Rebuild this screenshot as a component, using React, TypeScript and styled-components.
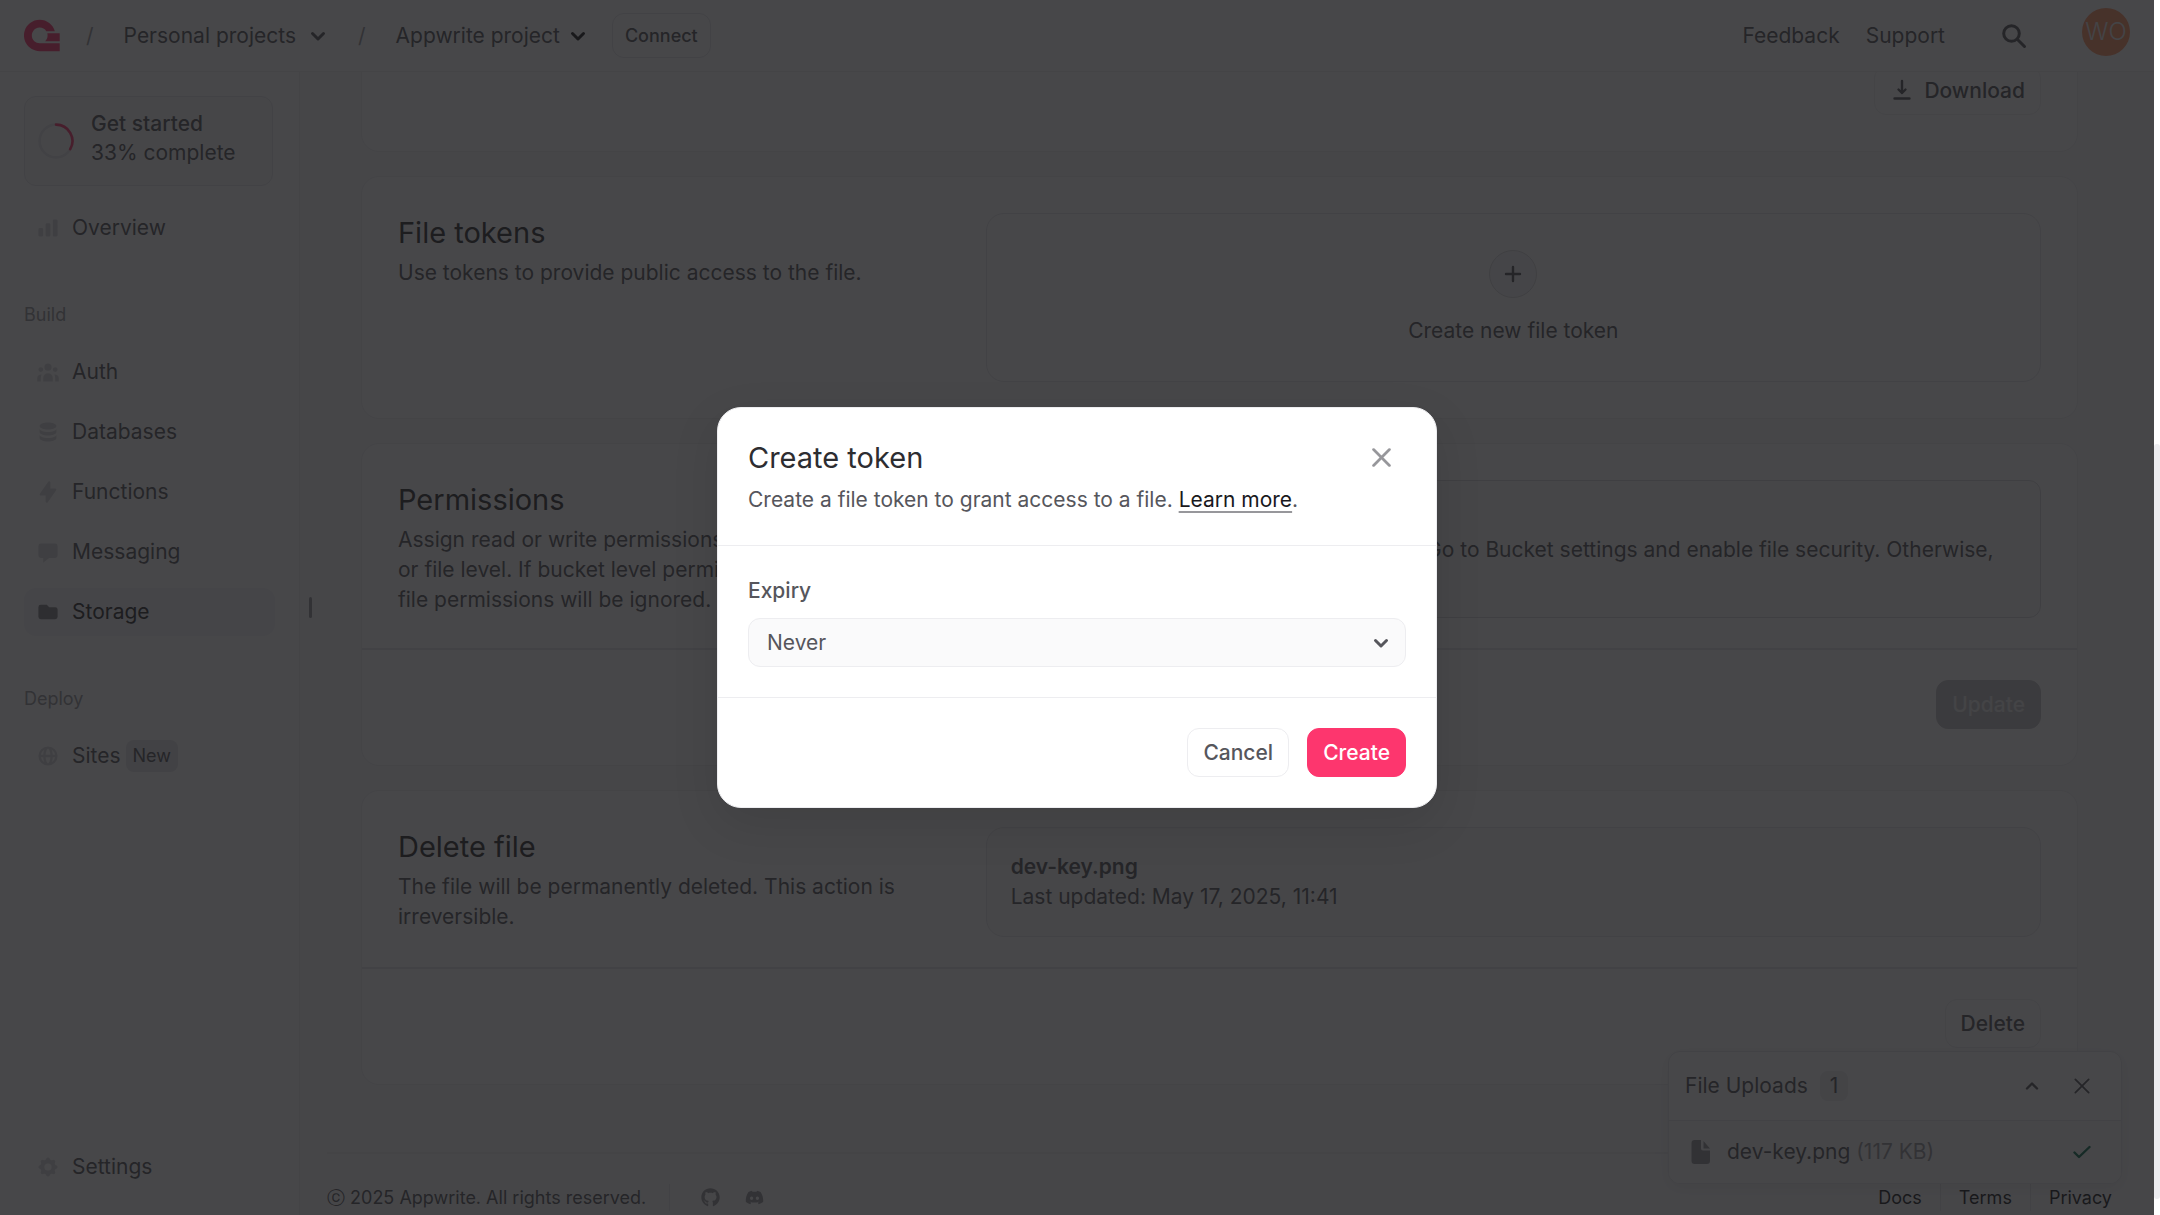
import React from 'react';
import styled, { createGlobalStyle } from 'styled-components';
import { HiChartBar, HiUserGroup, HiDatabase, HiLightningBolt, HiFolder, HiGlobeAlt, HiCog } from 'react-icons/hi';
import { FaGithub, FaDiscord } from 'react-icons/fa';

const color = {
  white: '#ffffff',
  n50: '#fafafb',
  n100: '#f4f4f7',
  n150: '#ededf0',
  n175: '#e4e4e8',
  n200: '#d8d8db',
  n300: '#c3c3c6',
  n500: '#97979b',
  n600: '#818186',
  n700: '#56565c',
  n800: '#2d2d31',
  n900: '#19191d',
  pink: '#fd366e',
  orange: '#fe9567',
  green: '#0a714f',
};

const GlobalStyle = createGlobalStyle`
  *, *::before, *::after { box-sizing: border-box; }
  body {
    margin: 0;
    overflow: hidden;
    background: ${color.white};
    font-family: Inter, "Liberation Sans", sans-serif;
    font-size: 21px;
    line-height: 30px;
    color: ${color.n700};
  }
  h2, h3, p, ul { margin: 0; padding: 0; }
  button, select { font: inherit; color: inherit; }
  a { color: inherit; text-decoration: none; }
  svg { display: block; flex: none; }
`;

/* ---------- page frame ---------- */

const Page = styled.div`
  display: grid;
  grid-template-columns: minmax(0, 1fr) 6px;
  height: 100vh;
`;

const Frame = styled.div`
  position: relative;
  display: grid;
  grid-template-rows: 72px minmax(0, 1fr);
  min-height: 0;
  overflow: hidden;
`;

const ScrollTrack = styled.div`
  display: flex;
  flex-direction: column;
  justify-content: flex-end;
  padding-bottom: 16px;
  background: ${color.white};
`;

const ScrollThumb = styled.div`
  height: 63%;
  border-radius: 3px;
  background: ${color.n150};
`;

const Columns = styled.div`
  display: grid;
  grid-template-columns: 300px minmax(0, 1fr);
  min-height: 0;
`;

/* ---------- header ---------- */

const Header = styled.header`
  position: relative;
  z-index: 1;
  display: flex;
  align-items: center;
  justify-content: space-between;
  padding: 0 24px;
  background: ${color.white};
  border-bottom: 1px solid ${color.n150};
`;

const HeaderGroup = styled.div`
  display: flex;
  align-items: center;
`;

const Slash = styled.span<{ $before: number }>`
  margin: 0 30px 0 ${(p) => p.$before}px;
  color: ${color.n500};
`;

const Crumb = styled.button<{ $gap: number; $arrow: string }>`
  display: flex;
  align-items: center;
  gap: ${(p) => p.$gap}px;
  padding: 0;
  border: 0;
  background: none;
  svg { color: ${(p) => p.$arrow}; }
`;

const ConnectButton = styled.button`
  height: 45px;
  margin-left: 22px;
  padding: 0 12px;
  border: 1px solid ${color.n175};
  border-radius: 12px;
  background: ${color.white};
  font-size: 18px;
  font-weight: 500;
`;

const HeaderLinks = styled.nav`
  display: flex;
  gap: 26px;
  margin-right: 45px;
`;

const SearchButton = styled.button`
  display: flex;
  justify-content: center;
  width: 48px;
  margin-right: 44px;
  padding: 0;
  border: 0;
  background: none;
`;

const Avatar = styled.button`
  display: flex;
  align-items: center;
  justify-content: center;
  align-self: flex-start;
  width: 48px;
  height: 48px;
  padding: 0;
  margin-bottom: 8px;
  border: 0;
  border-radius: 50%;
  background: ${color.orange};
  color: ${color.n150};
  font-size: 24px;
  font-weight: 300;
`;

/* ---------- side bar ---------- */

const Sidebar = styled.aside`
  display: flex;
  flex-direction: column;
  justify-content: space-between;
  padding: 24px;
  border-right: 1px solid ${color.n150};
  background: ${color.white};
`;

const Progress = styled.a`
  display: flex;
  gap: 17px;
  height: 90px;
  margin: 0 2px 18px 0;
  padding: 0 13px;
  border: 1px solid ${color.n175};
  border-radius: 12px;
  background: ${color.n50};
  line-height: 29px;
  svg { align-self: center; }
`;

const ProgressText = styled.span`
  display: flex;
  flex-direction: column;
  padding-top: 12px;
`;

const Strong = styled.span`
  font-weight: 500;
`;

const NavList = styled.ul`
  display: flex;
  flex-direction: column;
  gap: 12px;
  list-style: none;
`;

const NavLabel = styled.p`
  margin: 49px 0 20px;
  color: ${color.n500};
  font-size: 18px;
  line-height: 27px;
`;

const NavLink = styled.a<{ $active?: boolean }>`
  display: flex;
  align-items: center;
  height: 48px;
  padding: 0 12px;
  border-radius: 12px;
  background: ${(p) => (p.$active ? color.n100 : 'transparent')};
  color: ${(p) => (p.$active ? color.n800 : color.n700)};
  svg {
    margin-right: 12px;
    color: ${(p) => (p.$active ? color.n600 : color.n200)};
  }
`;

const NewBadge = styled.span`
  margin-left: 5px;
  padding: 2px 7px;
  border-radius: 8px;
  background: ${color.n175};
  font-size: 18px;
  line-height: 28px;
`;

const Resizer = styled.div`
  position: absolute;
  left: 309px;
  top: calc(50% - 11px);
  width: 3px;
  height: 21px;
  border-radius: 2px;
  background: ${color.n500};
`;

/* ---------- main area ---------- */

const Main = styled.main`
  min-height: 0;
  overflow: hidden;
  padding: 0 42px 0 27px;
  background: ${color.n50};
`;

/* The list is scrolled, so its first card runs up under the header. */
const CardList = styled.div`
  display: flex;
  flex-direction: column;
  gap: 24px;
  margin-top: -48px;
  padding: 0 34px;
`;

const Card = styled.section`
  border: 1px solid ${color.n150};
  border-radius: 18px;
  background: ${color.white};
`;

const CardBody = styled.div`
  display: grid;
  grid-template-columns: minmax(0, 1fr) minmax(0, 2fr);
  gap: 60px;
  padding: 36px 36px 30px;
`;

const PlainCard = styled(Card)`
  ${CardBody} { padding-bottom: 36px; }
`;

const CardFoot = styled.div`
  display: flex;
  justify-content: flex-end;
  padding: 30px 36px 36px;
  border-top: 2px solid ${color.n175};
`;

const FileCard = styled(Card)`
  display: flex;
  align-items: flex-end;
  justify-content: flex-end;
  height: 128px;
  padding: 36px;
`;

const Title = styled.h2`
  color: ${color.n800};
  font-size: 29px;
  font-weight: 400;
  line-height: 39px;
`;

const Description = styled.p`
  margin-top: 6px;
`;

const Button = styled.button<{ $kind?: 'primary' | 'disabled' }>`
  display: flex;
  align-items: center;
  gap: 10px;
  height: 49px;
  padding: 0 15px;
  border: 1px solid
    ${(p) => (p.$kind === 'primary' ? color.pink : p.$kind === 'disabled' ? color.n300 : color.n150)};
  border-radius: 12px;
  background: ${(p) => (p.$kind === 'primary' ? color.pink : p.$kind === 'disabled' ? color.n300 : color.white)};
  color: ${(p) => (p.$kind === 'primary' ? color.white : p.$kind === 'disabled' ? color.n150 : color.n700)};
  font-weight: 500;
`;

const EmptyState = styled.button`
  display: flex;
  flex-direction: column;
  align-items: center;
  justify-content: center;
  gap: 18px;
  height: 169px;
  border: 1px solid ${color.n175};
  border-radius: 18px;
  background: none;
`;

const PlusCircle = styled.span`
  display: flex;
  align-items: center;
  justify-content: center;
  width: 48px;
  height: 48px;
  border: 1px solid ${color.n200};
  border-radius: 50%;
  background: ${color.n100};
`;

const Alert = styled.div`
  display: flex;
  gap: 12px;
  padding: 24px 24px 22px;
  border: 1px solid ${color.n200};
  border-radius: 12px;
  background: ${color.n50};
  svg { margin-top: 3px; color: ${color.n500}; }
`;

const FileBox = styled.div`
  align-self: start;
  padding: 24px;
  border: 1px solid ${color.n175};
  border-radius: 18px;
  background: ${color.n50};
`;

const FileName = styled.h3`
  font-size: 21px;
  font-weight: 600;
  line-height: 30px;
`;

/* ---------- footer ---------- */

const Footer = styled.footer`
  display: flex;
  align-items: center;
  justify-content: space-between;
  margin-top: 67px;
  padding-top: 30px;
  border-top: 2px solid ${color.n150};
  font-size: 18px;
  line-height: 27px;
`;

const FooterGroup = styled.div<{ $gap: number }>`
  display: flex;
  align-items: center;
  gap: ${(p) => p.$gap}px;
`;

const Rule = styled.span`
  width: 1px;
  height: 27px;
  background: ${color.n175};
`;

const SocialLink = styled.a`
  margin-left: 8px;
  color: ${color.n500};
`;

const FooterLink = styled.a`
  color: ${color.n900};
`;

/* ---------- upload panel ---------- */

const Uploads = styled.aside`
  position: absolute;
  right: 32px;
  bottom: 31px;
  width: 454px;
  border: 1px solid ${color.n175};
  border-radius: 12px;
  background: ${color.white};
  box-shadow: 0 4px 16px rgba(0, 0, 0, 0.08);
  overflow: hidden;
`;

const UploadsHead = styled.div`
  display: flex;
  align-items: center;
  height: 69px;
  padding: 0 14px 0 16px;
  border-bottom: 1px solid ${color.n175};
`;

const CountBadge = styled.span`
  margin: 0 auto 0 12px;
  padding: 0 10px;
  border-radius: 8px;
  background: ${color.n150};
`;

const IconButton = styled.button<{ $width: number; $color: string }>`
  display: flex;
  align-items: center;
  justify-content: center;
  width: ${(p) => p.$width}px;
  height: 39px;
  padding: 0;
  border: 0;
  background: none;
  color: ${(p) => p.$color};
`;

const UploadRow = styled.div`
  display: flex;
  align-items: center;
  height: 62px;
  padding: 0 30px 0 22px;
  background: ${color.n50};
`;

const UploadName = styled.p`
  flex: 1;
  margin-left: 16px;
`;

const Muted = styled.span`
  color: ${color.n500};
`;

/* ---------- dialog ---------- */

const Overlay = styled.div`
  position: absolute;
  inset: 0;
  z-index: 2;
  display: flex;
  align-items: center;
  justify-content: center;
  background: rgba(25, 25, 28, 0.8);
`;

const Dialog = styled.form`
  width: 720px;
  border: 1px solid ${color.n150};
  border-radius: 24px;
  background: ${color.white};
  box-shadow: 0 16px 48px rgba(0, 0, 0, 0.1);
`;

const DialogPart = styled.div`
  padding: 30px;
  & + & { border-top: 1px solid ${color.n150}; }
`;

const DialogTop = styled.div`
  display: flex;
  justify-content: space-between;
  margin-bottom: 8px;
`;

const TextLink = styled.a`
  color: ${color.n900};
  text-decoration: underline;
  text-decoration-color: ${color.n500};
  text-decoration-thickness: 2px;
  text-underline-offset: 4px;
`;

const Label = styled.label`
  display: block;
  margin-bottom: 12px;
  font-weight: 500;
`;

const SelectWrap = styled.div`
  position: relative;
  svg {
    position: absolute;
    right: 13px;
    top: 13px;
    pointer-events: none;
  }
`;

const Select = styled.select`
  display: block;
  width: 100%;
  height: 49px;
  padding: 0 18px;
  border: 1px solid ${color.n150};
  border-radius: 12px;
  background: ${color.n50};
  appearance: none;
`;

const Actions = styled.div`
  display: flex;
  justify-content: flex-end;
  gap: 18px;
`;

/* ---------- drawings ---------- */

const Logo = () => (
  <svg width="36" height="33" viewBox="0 0 112 98" fill={color.pink} aria-hidden="true">
    <path d="M111.1 73.473v24.49H48.87C30.74 97.964 14.91 88.114 6.44 73.473a48.6 48.6 0 0 1-3.21-6.68A48.4 48.4 0 0 1 0 52.293v-6.622c.073-1.133.19-2.258.34-3.369.31-2.28.777-4.51 1.392-6.679C7.545 15.064 26.448 0 48.87 0s41.323 15.064 47.136 35.623H69.399C65.03 28.922 57.469 24.491 48.87 24.491s-16.16 4.43-20.527 11.132a24.4 24.4 0 0 0-3.042 6.68 24.5 24.5 0 0 0-.921 6.679c0 7.02 2.952 13.347 7.685 17.811a24.4 24.4 0 0 0 16.806 6.68H111.1Z" />
    <path d="M111.1 42.303v24.49H65.676c4.733-4.463 7.686-10.79 7.686-17.811 0-2.315-.321-4.555-.922-6.68H111.1Z" />
  </svg>
);

const Chevron = ({ up = false }: { up?: boolean }) => (
  <svg width="24" height="24" viewBox="0 0 24 24" fill="none" stroke="currentColor" strokeWidth={up ? 2.4 : 3} strokeLinecap="round" strokeLinejoin="round" aria-hidden="true">
    <path d={up ? 'M7 14.5l5-5 5 5' : 'M6.5 9.5l5.500 5.500 5.500-5.500'} />
  </svg>
);

const Cross = ({ size, weight }: { size: number; weight: number }) => (
  <svg width={size} height={size} viewBox="0 0 18 18" fill="none" stroke="currentColor" strokeWidth={weight} strokeLinecap="round" aria-hidden="true">
    <path d="M1.5 1.5l15 15M16.5 1.5l-15 15" />
  </svg>
);

const SearchIcon = () => (
  <svg width="26" height="26" viewBox="0 0 26 26" fill="none" stroke={color.n700} strokeWidth="3" strokeLinecap="round" aria-hidden="true">
    <circle cx="10.5" cy="10.5" r="7.8" />
    <path d="M16.5 16.5l7 7" />
  </svg>
);

const Ring = () => (
  <svg width="36" height="36" viewBox="0 0 36 36" fill="none" strokeWidth="2.6" strokeLinecap="round" aria-hidden="true">
    <circle cx="18" cy="18" r="16.4" stroke={color.n175} />
    <path d="M18 1.6A16.4 16.4 0 0 1 32.2 26.2" stroke={color.pink} />
  </svg>
);

const MessageIcon = () => (
  <svg width="24" height="24" viewBox="0 0 20 20" fill="currentColor" aria-hidden="true">
    <path d="M18 5v8a2 2 0 0 1-2 2h-5l-5 4v-4H4a2 2 0 0 1-2-2V5a2 2 0 0 1 2-2h12a2 2 0 0 1 2 2z" />
  </svg>
);

const DownloadIcon = () => (
  <svg width="24" height="24" viewBox="0 0 24 24" fill="none" stroke="currentColor" strokeWidth="2.4" strokeLinecap="round" strokeLinejoin="round" aria-hidden="true">
    <path d="M12 2v12M8.500 10.500l3.500 3.500 3.500-3.500M4.500 19.500h15" />
  </svg>
);

const PlusIcon = () => (
  <svg width="18" height="18" viewBox="0 0 18 18" fill="none" stroke="currentColor" strokeWidth="2.4" strokeLinecap="round" aria-hidden="true">
    <path d="M9 2v14M2 9h14" />
  </svg>
);

const InfoIcon = () => (
  <svg width="24" height="24" viewBox="0 0 24 24" fill="none" stroke="currentColor" strokeWidth="2" strokeLinecap="round" aria-hidden="true">
    <circle cx="12" cy="12" r="9" />
    <path d="M12 11v5M12 8v.1" />
  </svg>
);

const FileIcon = () => (
  <svg width="20" height="26" viewBox="0 0 20 26" fill={color.n500} aria-hidden="true">
    <path d="M3.500 1H10v8.500a2 2 0 0 0 2 2h7V22a3 3 0 0 1-3 3H3.500a3 3 0 0 1-3-3V4a3 3 0 0 1 3-3z" />
    <path d="M12.500 2l6.500 7.500h-6.500z" />
  </svg>
);

const CheckIcon = () => (
  <svg width="18" height="14" viewBox="0 0 18 14" fill="none" stroke={color.green} strokeWidth="2.4" strokeLinecap="round" strokeLinejoin="round" aria-hidden="true">
    <path d="M1.500 7.500l4.500 4.500L16.500 2" />
  </svg>
);

/* ---------- app ---------- */

const buildLinks = [
  { name: 'Auth', icon: <HiUserGroup size={24} /> },
  { name: 'Databases', icon: <HiDatabase size={24} /> },
  { name: 'Functions', icon: <HiLightningBolt size={24} /> },
  { name: 'Messaging', icon: <MessageIcon /> },
  { name: 'Storage', icon: <HiFolder size={24} />, active: true },
];

export default function App() {
  return (
    <Page>
      <GlobalStyle />
      <Frame>
        <Header>
          <HeaderGroup>
            <Logo />
            <Slash $before={26}>/</Slash>
            <Crumb type="button" $gap={10} $arrow={color.n700}>
              Personal projects
              <Chevron />
            </Crumb>
            <Slash $before={28}>/</Slash>
            <Crumb type="button" $gap={6} $arrow={color.n900}>
              Appwrite project
              <Chevron />
            </Crumb>
            <ConnectButton type="button">Connect</ConnectButton>
          </HeaderGroup>
          <HeaderGroup>
            <HeaderLinks>
              <a href="#feedback">Feedback</a>
              <a href="#support">Support</a>
            </HeaderLinks>
            <SearchButton type="button" aria-label="Search">
              <SearchIcon />
            </SearchButton>
            <Avatar type="button">WO</Avatar>
          </HeaderGroup>
        </Header>

        <Columns>
          <Sidebar>
            <nav>
              <Progress href="#start">
                <Ring />
                <ProgressText>
                  <Strong>Get started</Strong>
                  <span>33% complete</span>
                </ProgressText>
              </Progress>
              <NavLink href="#overview">
                <HiChartBar size={24} />
                Overview
              </NavLink>
              <NavLabel>Build</NavLabel>
              <NavList>
                {buildLinks.map((link) => (
                  <li key={link.name}>
                    <NavLink href="#section" $active={link.active}>
                      {link.icon}
                      {link.name}
                    </NavLink>
                  </li>
                ))}
              </NavList>
              <NavLabel>Deploy</NavLabel>
              <NavLink href="#sites">
                <HiGlobeAlt size={24} />
                Sites
                <NewBadge>New</NewBadge>
              </NavLink>
            </nav>
            <NavLink href="#settings">
              <HiCog size={24} />
              Settings
            </NavLink>
          </Sidebar>

          <Main>
            <CardList>
              <FileCard>
                <Button type="button">
                  <DownloadIcon />
                  Download
                </Button>
              </FileCard>

              <PlainCard>
                <CardBody>
                  <div>
                    <Title>File tokens</Title>
                    <Description>Use tokens to provide public access to the file.</Description>
                  </div>
                  <EmptyState type="button">
                    <PlusCircle>
                      <PlusIcon />
                    </PlusCircle>
                    Create new file token
                  </EmptyState>
                </CardBody>
              </PlainCard>

              <Card>
                <CardBody>
                  <div>
                    <Title>Permissions</Title>
                    <Description>
                      Assign read or write permissions at the bucket level or file level. If bucket level permissions
                      are assigned, file permissions will be ignored.
                    </Description>
                  </div>
                  <Alert>
                    <InfoIcon />
                    <div>
                      <Strong>File security is disabled</Strong>
                      <p>
                        If you want to assign file permissions. Go to Bucket settings and enable file security.
                        Otherwise, only bucket permissions apply.
                      </p>
                    </div>
                  </Alert>
                </CardBody>
                <CardFoot>
                  <Button type="button" $kind="disabled" disabled>
                    Update
                  </Button>
                </CardFoot>
              </Card>

              <Card>
                <CardBody>
                  <div>
                    <Title>Delete file</Title>
                    <Description>The file will be permanently deleted. This action is irreversible.</Description>
                  </div>
                  <FileBox>
                    <FileName>dev-key.png</FileName>
                    <p>Last updated: May 17, 2025, 11:41</p>
                  </FileBox>
                </CardBody>
                <CardFoot>
                  <Button type="button">Delete</Button>
                </CardFoot>
              </Card>
            </CardList>

            <Footer>
              <FooterGroup $gap={23}>
                <span>ⓒ 2025 Appwrite. All rights reserved.</span>
                <Rule />
                <FooterGroup $gap={17}>
                  <SocialLink href="#github" aria-label="GitHub">
                    <FaGithub size={19} />
                  </SocialLink>
                  <SocialLink href="#discord" aria-label="Discord">
                    <FaDiscord size={19} />
                  </SocialLink>
                </FooterGroup>
              </FooterGroup>
              <FooterGroup $gap={18}>
                <FooterLink href="#docs">Docs</FooterLink>
                <Rule />
                <FooterLink href="#terms">Terms</FooterLink>
                <Rule />
                <FooterLink href="#privacy">Privacy</FooterLink>
              </FooterGroup>
            </Footer>
          </Main>
        </Columns>

        <Resizer />

        <Uploads>
          <UploadsHead>
            File Uploads
            <CountBadge>1</CountBadge>
            <IconButton type="button" aria-label="Collapse" $width={50} $color={color.n700}>
              <Chevron up />
            </IconButton>
            <IconButton type="button" aria-label="Close uploads" $width={50} $color={color.n700}>
              <Cross size={16} weight={2} />
            </IconButton>
          </UploadsHead>
          <UploadRow>
            <FileIcon />
            <UploadName>
              dev-key.png <Muted>(117 KB)</Muted>
            </UploadName>
            <CheckIcon />
          </UploadRow>
        </Uploads>

        <Overlay>
          <Dialog role="dialog" aria-labelledby="dialog-title" onSubmit={(e) => e.preventDefault()}>
            <DialogPart>
              <DialogTop>
                <Title id="dialog-title">Create token</Title>
                <IconButton type="button" aria-label="Close" $width={50} $color={color.n500}>
                  <Cross size={19} weight={2.6} />
                </IconButton>
              </DialogTop>
              <p>
                Create a file token to grant access to a file. <TextLink href="#learn">Learn more</TextLink>.
              </p>
            </DialogPart>
            <DialogPart>
              <Label htmlFor="expiry">Expiry</Label>
              <SelectWrap>
                <Select id="expiry" defaultValue="never">
                  <option value="never">Never</option>
                </Select>
                <Chevron />
              </SelectWrap>
            </DialogPart>
            <DialogPart>
              <Actions>
                <Button type="button">Cancel</Button>
                <Button type="submit" $kind="primary">
                  Create
                </Button>
              </Actions>
            </DialogPart>
          </Dialog>
        </Overlay>
      </Frame>
      <ScrollTrack>
        <ScrollThumb />
      </ScrollTrack>
    </Page>
  );
}
